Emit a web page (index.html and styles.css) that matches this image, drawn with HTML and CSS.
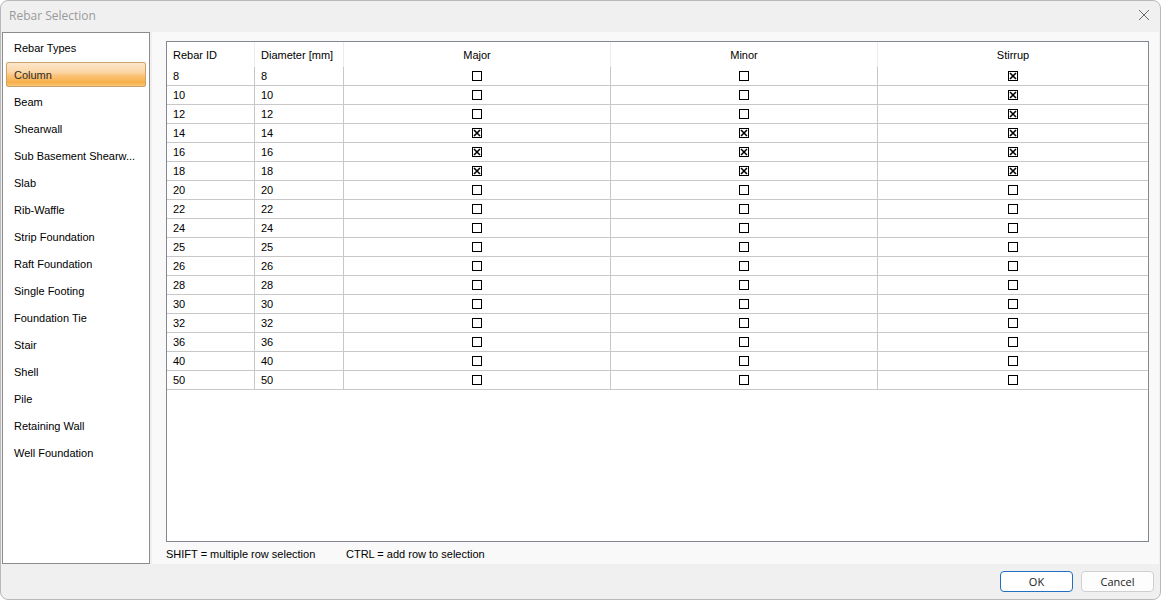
FILE: index.html
```html
<!DOCTYPE html>
<html lang="en">
<head>
    <meta charset="UTF-8">
    <title>Rebar Selection</title>
    <link rel="stylesheet" href="styles.css">
</head>
<body>
    <div class="window">
        <div class="titlebar">
            <span class="title">Rebar Selection</span>
            <svg class="close" width="12" height="12" viewBox="0 0 12 12">
                <path d="M1 1 L11 11 M11 1 L1 11" stroke="#6b6b6b" stroke-width="1"/>
            </svg>
        </div>
        <div class="main">
            <div class="sidebar">
                <div class="item">Rebar Types</div>
                <div class="item selected">Column</div>
                <div class="item">Beam</div>
                <div class="item">Shearwall</div>
                <div class="item">Sub Basement Shearw...</div>
                <div class="item">Slab</div>
                <div class="item">Rib-Waffle</div>
                <div class="item">Strip Foundation</div>
                <div class="item">Raft Foundation</div>
                <div class="item">Single Footing</div>
                <div class="item">Foundation Tie</div>
                <div class="item">Stair</div>
                <div class="item">Shell</div>
                <div class="item">Pile</div>
                <div class="item">Retaining Wall</div>
                <div class="item">Well Foundation</div>
            </div>
            <div class="content">
                <div class="grid">
                    <table>
                        <thead>
                            <tr>
                                <th class="c-id">Rebar ID</th>
                                <th class="c-dia">Diameter [mm]</th>
                                <th class="c-chk c-major">Major</th>
                                <th class="c-chk c-minor">Minor</th>
                                <th class="c-chk c-stir">Stirrup</th>
                            </tr>
                        </thead>
                        <tbody id="rows"></tbody>
                    </table>
                </div>
                <div class="hints">
                    <span class="hint">SHIFT = multiple row selection</span>
                    <span>CTRL = add row to selection</span>
                </div>
            </div>
        </div>
        <div class="footer">
            <button class="btn primary">OK</button>
            <button class="btn">Cancel</button>
        </div>
    </div>
    <script>
        const rebars = [8, 10, 12, 14, 16, 18, 20, 22, 24, 25, 26, 28, 30, 32, 36, 40, 50];
        const major = [14, 16, 18];
        const minor = [14, 16, 18];
        const stirrup = [8, 10, 12, 14, 16, 18];

        function box(on) {
            if (on) {
                return '<svg class="box" width="10" height="10" viewBox="0 0 10 10">' +
                    '<rect x="0.5" y="0.5" width="9" height="9" fill="#fff" stroke="#000"/>' +
                    '<path d="M2 2 L8 8 M8 2 L2 8" stroke="#000" stroke-width="1.6"/></svg>';
            }
            return '<svg class="box" width="10" height="10" viewBox="0 0 10 10">' +
                '<rect x="0.5" y="0.5" width="9" height="9" fill="#fff" stroke="#000"/></svg>';
        }

        const body = document.getElementById("rows");
        rebars.forEach(d => {
            const tr = document.createElement("tr");
            tr.innerHTML = `<td>${d}</td><td>${d}</td>` +
                `<td class="chk">${box(major.includes(d))}</td>` +
                `<td class="chk">${box(minor.includes(d))}</td>` +
                `<td class="chk">${box(stirrup.includes(d))}</td>`;
            body.appendChild(tr);
        });
    </script>
</body>
</html>
```

FILE: styles.css
```css
body {
    margin: 0;
    font-family: "Liberation Sans", Arial, sans-serif;
    font-size: 11px;
    color: #000;
    background: #fff;
}
.window {
    width: 1161px;
    height: 600px;
    box-sizing: border-box;
    border: 1px solid #b9b9b9;
    border-radius: 8px;
    background: #f0f0f0;
    display: flex;
    flex-direction: column;
    overflow: hidden;
}
.titlebar {
    height: 31px;
    flex: none;
    display: flex;
    align-items: center;
    justify-content: space-between;
    padding: 0 10px 0 8px;
}
.title {
    font-family: "Open Sans", "Liberation Sans", sans-serif;
    font-size: 12px;
    color: #9a9a9a;
    margin-top: -2px;
}
.close {
    margin-top: -3px;
}
.main {
    height: 532px;
    flex: none;
    display: flex;
    margin: 0 1px;
}
.sidebar {
    width: 148px;
    flex: none;
    box-sizing: border-box;
    border: 1px solid #8c8c8c;
    background: #fff;
    padding: 2px 3px 0 3px;
}
.item {
    height: 25px;
    line-height: 25px;
    margin-bottom: 2px;
    padding-left: 7px;
    border: 1px solid transparent;
    box-sizing: border-box;
    border-radius: 2px;
    white-space: nowrap;
}
.item.selected {
    border-color: #c9a36a;
    background: linear-gradient(#fde7cd 0%, #fcd6a4 40%, #fbc277 55%, #f7b04a 85%, #f8c67a 100%);
    color: #2b2b2b;
}
.content {
    flex: 1;
    min-width: 0;
    margin-left: 2px;
    background: #f9f9f9;
    padding: 9px 10px 0 14px;
    display: flex;
    flex-direction: column;
}
.grid {
    height: 502px;
    box-sizing: border-box;
    border: 1px solid #828790;
    background: #fff;
    overflow: hidden;
}
table {
    border-collapse: collapse;
    table-layout: fixed;
    width: 980px;
}
th {
    height: 25px;
    font-weight: normal;
    text-align: left;
    padding: 0 0 0 6px;
    border-right: 1px solid #ececec;
}
th.c-chk {
    text-align: center;
    padding: 0;
}
th.c-id { width: 81px; }
th.c-dia { width: 82px; }
th.c-major { width: 266px; }
th.c-minor { width: 266px; }
th.c-stir { width: 270px; }
th:last-child {
    border-right: none;
}
td {
    height: 18px;
    padding: 0 0 0 6px;
    border-bottom: 1px solid #c8c8c8;
    border-right: 1px solid #c8c8c8;
    line-height: 18px;
}
td.chk {
    text-align: center;
    padding: 0;
}
td:last-child {
    border-right: none;
}
.box {
    display: inline-block;
    vertical-align: middle;
    margin-top: -2px;
}
.hints {
    height: 21px;
    display: flex;
    align-items: center;
    padding-top: 1px;
}
.hint {
    width: 180px;
}
.footer {
    flex: 1;
    display: flex;
    justify-content: flex-end;
    align-items: flex-start;
    gap: 8px;
    padding: 7px 6px 0 0;
}
.btn {
    width: 73px;
    height: 21px;
    box-sizing: border-box;
    border: 1px solid #cfcfcf;
    border-radius: 4px;
    background: #fdfdfd;
    font-family: "Open Sans", "Liberation Sans", sans-serif;
    font-size: 11px;
    color: #1a1a1a;
    padding: 0;
}
.btn.primary {
    border-color: #1f6fc2;
    background: #fff;
}
```
